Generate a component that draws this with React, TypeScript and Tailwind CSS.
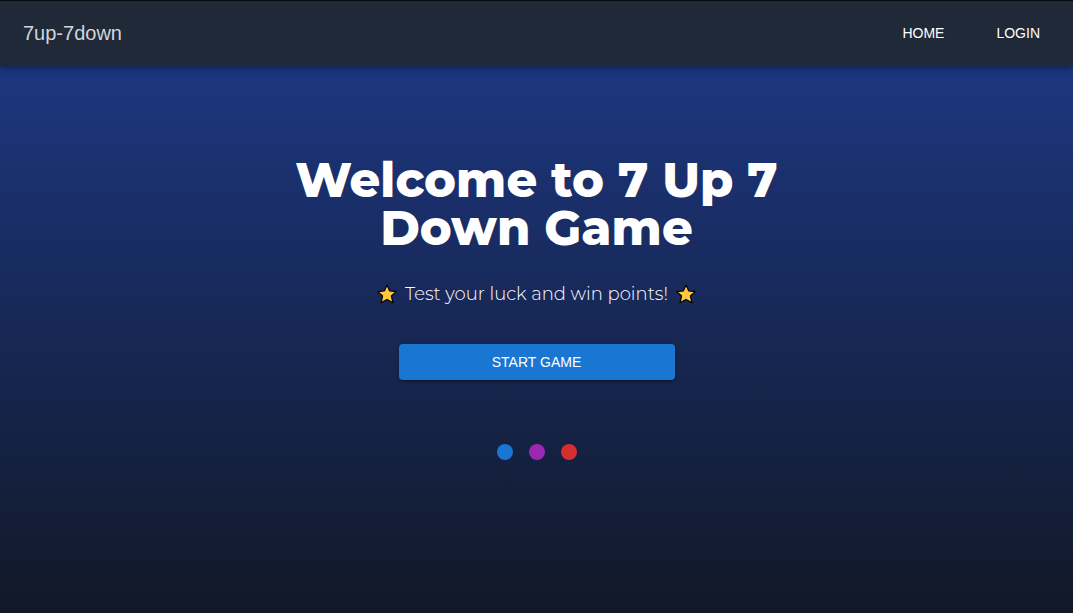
import React from "react";

const navLinks = [
  { label: "Home", href: "#home" },
  { label: "Login", href: "#login" },
];

function Star() {
  return (
    <svg viewBox="0 0 20 20" className="size-5 shrink-0" aria-hidden="true">
      <path
        d="M10 1 L12.7 7 L19.2 7.6 L14.4 12 L16 18.8 L10 15.4 L4 18.8 L5.6 12 L0.8 7.6 L7.3 7 Z"
        fill="#ffc83d"
        stroke="#000000"
        strokeWidth="1.2"
        strokeLinejoin="round"
      />
    </svg>
  );
}

function NavBar() {
  return (
    <header className="z-10 flex min-h-[66px] items-center justify-between border-t border-[#05090f] bg-[#1f2937] px-[23px] pb-0.5 shadow-[0_2px_4px_-1px_rgba(0,0,0,0.2),0_4px_5px_rgba(0,0,0,0.14),0_1px_10px_rgba(0,0,0,0.12)]">
      <a href="#top" className="text-xl text-[#d1d5db]">
        7up-7down
      </a>
      <nav className="flex gap-8">
        {navLinks.map((link) => (
          <a key={link.label} href={link.href} className="px-2.5 py-1.5 text-sm uppercase text-white">
            {link.label}
          </a>
        ))}
      </nav>
    </header>
  );
}

export default function App() {
  return (
    <div className="flex min-h-screen flex-col bg-linear-to-b/srgb from-[#1e3a8a] to-[#111827] font-['Liberation_Sans',Arial,sans-serif]">
      <NavBar />
      <main className="flex flex-1 flex-col items-center px-4 pt-[90px] text-center text-white">
        <h1 className="max-w-xl font-[Montserrat,Inter,sans-serif] text-5xl leading-none font-extrabold">
          Welcome to 7 Up 7 Down Game
        </h1>
        <p className="mt-7 flex items-center gap-2 font-[Montserrat,Inter,sans-serif] text-lg font-light">
          <Star />
          Test your luck and win points!
          <Star />
        </p>
        <button
          type="button"
          className="mt-9 h-9 w-full max-w-[276px] rounded bg-[#1976d2] text-sm uppercase shadow-[0_3px_1px_-2px_rgba(0,0,0,0.2),0_2px_2px_rgba(0,0,0,0.14),0_1px_5px_rgba(0,0,0,0.12)]"
        >
          Start Game
        </button>
        <div className="mt-16 flex gap-4">
          <span className="size-4 rounded-full bg-[#1976d2]" />
          <span className="size-4 rounded-full bg-[#9c27b0]" />
          <span className="size-4 rounded-full bg-[#d32f2f]" />
        </div>
      </main>
    </div>
  );
}
